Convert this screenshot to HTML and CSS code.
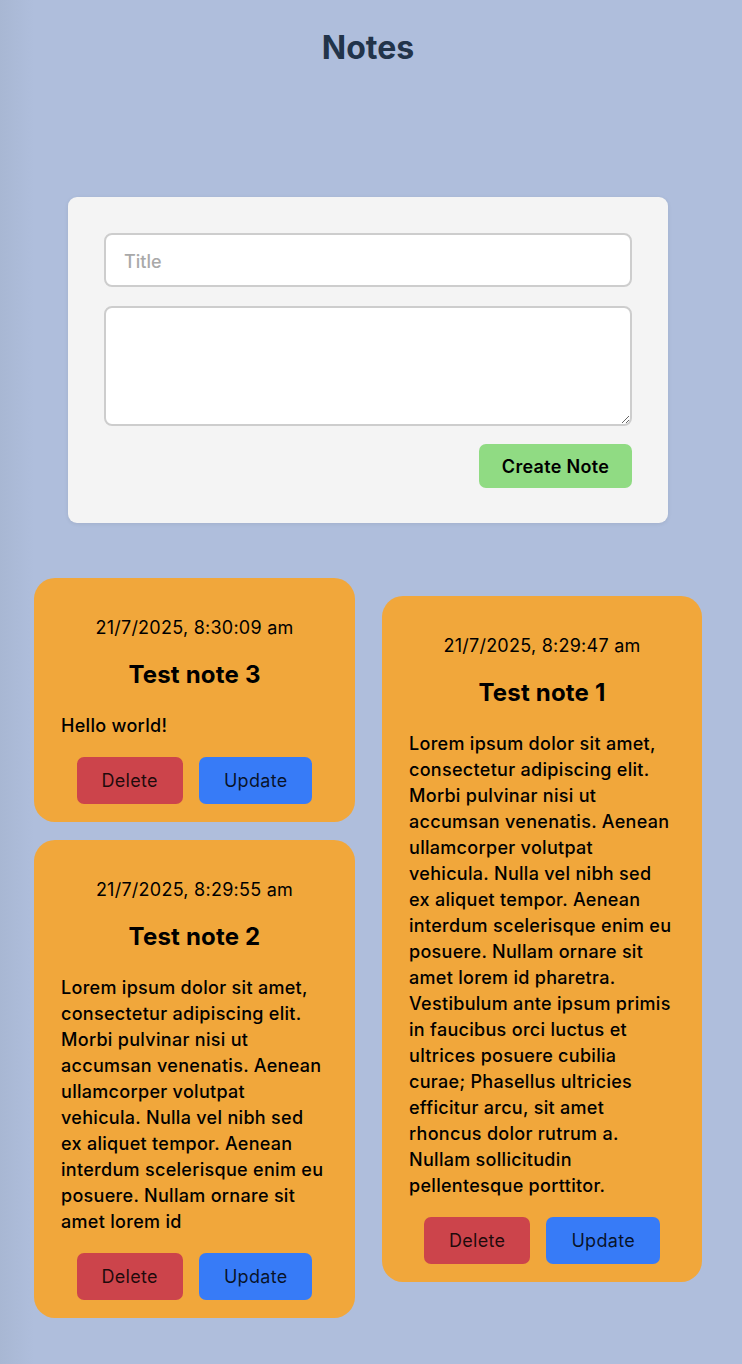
FILE: index.html
```html
<!DOCTYPE html>
<html lang="en">
<head>
<meta charset="utf-8">
<title>Notes</title>
<link rel="stylesheet" href="styles.css">
</head>
<body>
<div class="page">
  <h1 class="page-title">Notes</h1>

  <form class="note-form">
    <input class="field field-title" type="text" placeholder="Title">
    <textarea class="field field-body"></textarea>
    <div class="form-actions">
      <button type="button" class="btn btn-create">Create Note</button>
    </div>
  </form>

  <div class="notes">
    <div class="notes-col">
      <article class="note">
        <p class="note-date">21/7/2025, 8:30:09 am</p>
        <h2 class="note-title">Test note 3</h2>
        <p class="note-body">Hello world!</p>
        <div class="note-actions">
          <button type="button" class="btn btn-delete">Delete</button>
          <button type="button" class="btn btn-update">Update</button>
        </div>
      </article>
      <article class="note">
        <p class="note-date">21/7/2025, 8:29:55 am</p>
        <h2 class="note-title">Test note 2</h2>
        <p class="note-body">Lorem ipsum dolor sit amet, consectetur adipiscing elit. Morbi pulvinar nisi ut accumsan venenatis. Aenean ullamcorper volutpat vehicula. Nulla vel nibh sed ex aliquet tempor. Aenean interdum scelerisque enim eu posuere. Nullam ornare sit amet lorem id</p>
        <div class="note-actions">
          <button type="button" class="btn btn-delete">Delete</button>
          <button type="button" class="btn btn-update">Update</button>
        </div>
      </article>
    </div>
    <div class="notes-col notes-col-offset">
      <article class="note">
        <p class="note-date">21/7/2025, 8:29:47 am</p>
        <h2 class="note-title">Test note 1</h2>
        <p class="note-body">Lorem ipsum dolor sit amet, consectetur adipiscing elit. Morbi pulvinar nisi ut accumsan venenatis. Aenean ullamcorper volutpat vehicula. Nulla vel nibh sed ex aliquet tempor. Aenean interdum scelerisque enim eu posuere. Nullam ornare sit amet lorem id pharetra. Vestibulum ante ipsum primis in faucibus orci luctus et ultrices posuere cubilia curae; Phasellus ultricies efficitur arcu, sit amet rhoncus dolor rutrum a. Nullam sollicitudin pellentesque porttitor.</p>
        <div class="note-actions">
          <button type="button" class="btn btn-delete">Delete</button>
          <button type="button" class="btn btn-update">Update</button>
        </div>
      </article>
    </div>
  </div>
</div>
</body>
</html>
```

FILE: styles.css
```css
* { box-sizing: border-box; }

html, body {
  margin: 0;
  padding: 0;
}

body {
  min-height: 1364px;
  background: linear-gradient(to right, #a8b7d3 0px, #afbedc 34px, #afbedc 100%);
  font-family: Inter, "Noto Sans", "Liberation Sans", sans-serif;
  color: #000;
}

.page {
  padding: 0 40px 40px 34px;
}

.page-title {
  margin: 0;
  padding-top: 28px;
  text-align: center;
  font-size: 32px;
  line-height: 39px;
  font-weight: 700;
  color: #22344a;
}

.note-form {
  width: 600px;
  margin: 130px auto 0;
  padding: 36px 36px 35px;
  background: #f4f4f4;
  border-radius: 9px;
  box-shadow: 0 1px 4px rgba(0, 0, 0, 0.08);
  display: flex;
  flex-direction: column;
}

.field {
  display: block;
  width: 100%;
  border: 2px solid #cdcdcd;
  border-radius: 8px;
  background: #fff;
  font-family: inherit;
  font-size: 18px;
  color: #222;
  padding: 2px 18px 0;
  outline: none;
}

.field::placeholder {
  color: #a9a9a9;
  font-weight: 500;
}

.field-title {
  height: 54px;
}

.field-body {
  height: 120px;
  margin-top: 19px;
  padding-top: 12px;
  resize: vertical;
}

.form-actions {
  display: flex;
  justify-content: flex-end;
  margin-top: 18px;
}

.btn {
  border: none;
  font-family: inherit;
  cursor: pointer;
}

.btn-create {
  height: 44px;
  width: 153px;
  border-radius: 7px;
  background: #90db83;
  color: #000;
  font-size: 18px;
  font-weight: 600;
  letter-spacing: 0.3px;
}

.notes {
  margin-top: 55px;
  display: grid;
  grid-template-columns: 321px 320px;
  column-gap: 27px;
  align-items: start;
}

.notes-col {
  display: flex;
  flex-direction: column;
  gap: 18px;
}

.notes-col-offset {
  margin-top: 18px;
}

.note {
  background: #f1a73b;
  border-radius: 21px;
  padding: 37px 27px 18px;
}

.note-date {
  margin: 0;
  text-align: center;
  font-size: 18px;
  line-height: 26px;
  font-weight: 400;
  letter-spacing: 0.25px;
}

.note-title {
  margin: 19px 0 0;
  text-align: center;
  font-size: 24px;
  line-height: 30px;
  font-weight: 700;
  letter-spacing: 0.2px;
}

.note-body {
  margin: 23px 0 0;
  font-size: 18px;
  line-height: 26px;
  font-weight: 500;
  letter-spacing: 0.3px;
}

.note-actions {
  margin-top: 18px;
  display: flex;
  justify-content: center;
  gap: 16px;
}

.btn-delete,
.btn-update {
  height: 47px;
  padding: 0 25px;
  border-radius: 7px;
  font-size: 18px;
  font-weight: 400;
  letter-spacing: 0.3px;
  color: rgba(0, 0, 0, 0.85);
}

.btn-delete {
  background: #cc444b;
}

.btn-update {
  background: #377bf7;
}
```
